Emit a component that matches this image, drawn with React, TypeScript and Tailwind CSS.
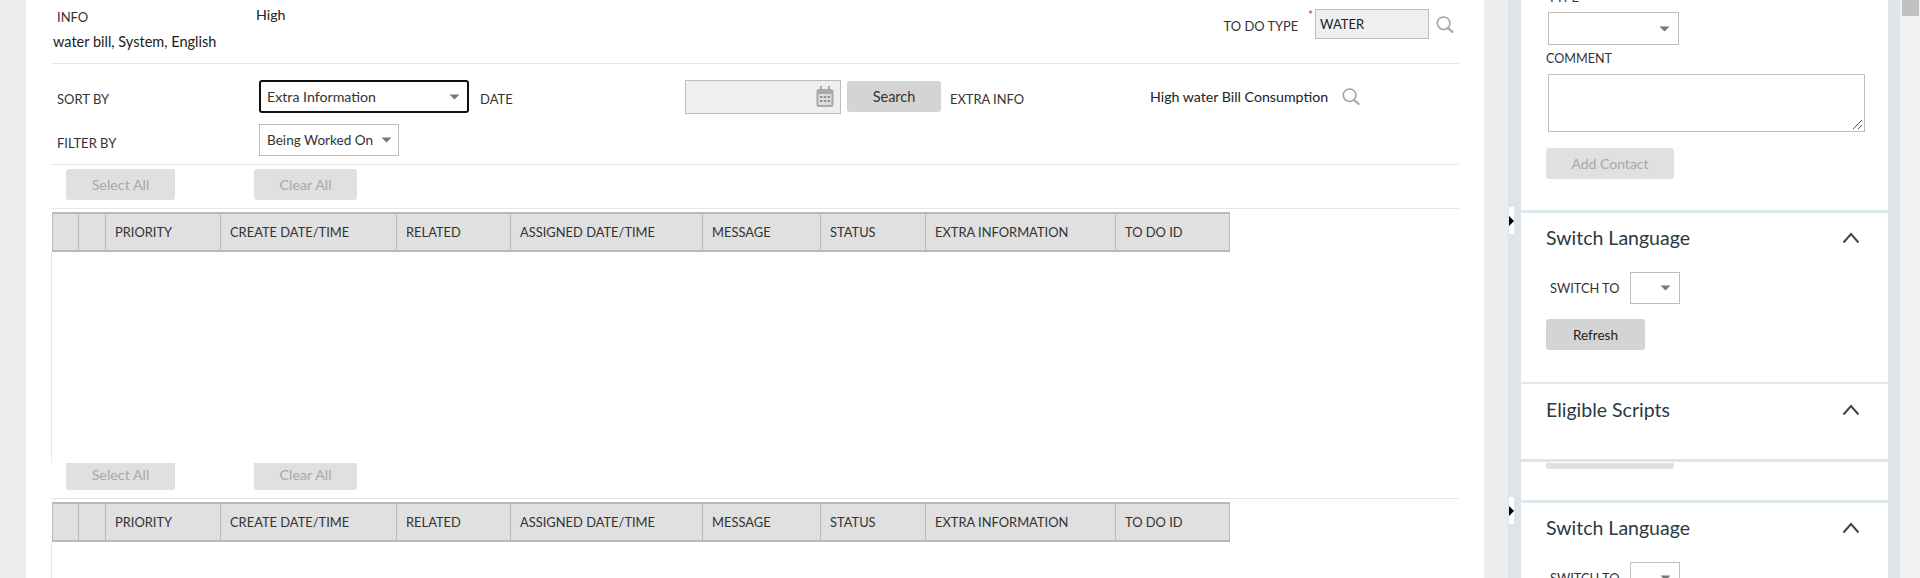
import React from 'react'

const columns = [
  { label: '', width: 'w-[26px]' },
  { label: '', width: 'w-[27px]' },
  { label: 'PRIORITY', width: 'w-[115px]' },
  { label: 'CREATE DATE/TIME', width: 'w-[176px]' },
  { label: 'RELATED', width: 'w-[114px]' },
  { label: 'ASSIGNED DATE/TIME', width: 'w-[192px]' },
  { label: 'MESSAGE', width: 'w-[118px]' },
  { label: 'STATUS', width: 'w-[105px]' },
  { label: 'EXTRA INFORMATION', width: 'w-[190px]' },
  { label: 'TO DO ID', width: 'w-[114px]' },
]

function Caret() {
  return (
    <svg width="11" height="6" viewBox="0 0 11 6" className="shrink-0">
      <path d="M0.5 0.5h10L5.5 5.5z" fill="#777" />
    </svg>
  )
}

function SearchIcon({ className }: { className?: string }) {
  return (
    <svg width="18" height="17" viewBox="0 0 18 17" fill="none" stroke="#a3a3a3" strokeWidth="1.5" className={className}>
      <circle cx="7.6" cy="7.2" r="6.3" />
      <path d="M12 12l5.2 4.6" strokeWidth="2" />
    </svg>
  )
}

function CalendarIcon() {
  return (
    <svg width="18" height="21" viewBox="0 0 18 21" className="shrink-0">
      <rect x="0.5" y="3" width="17" height="18" rx="2.5" fill="#a8a8a8" />
      <rect x="4" y="0" width="2" height="5" fill="#a8a8a8" />
      <rect x="12" y="0" width="2" height="5" fill="#a8a8a8" />
      <rect x="2.5" y="8" width="13" height="11" rx="1" fill="#dcdcdc" />
      <g fill="#8f8f8f">
        <rect x="4" y="10" width="2.4" height="2" />
        <rect x="7.8" y="10" width="2.4" height="2" />
        <rect x="11.6" y="10" width="2.4" height="2" />
        <rect x="4" y="14" width="2.4" height="2" />
        <rect x="7.8" y="14" width="2.4" height="2" />
        <rect x="11.6" y="14" width="2.4" height="2" />
      </g>
    </svg>
  )
}

function Chevron() {
  return (
    <svg width="18" height="12" viewBox="0 0 18 12" fill="none" stroke="#444" strokeWidth="2" className="mr-[28px]">
      <path d="M1.5 10.5L9 2l7.5 8.5" />
    </svg>
  )
}

function Select({ className, text }: { className: string; text?: string }) {
  return (
    <div className={`flex items-center justify-between bg-white text-[#333] ${className}`}>
      <span>{text}</span>
      <Caret />
    </div>
  )
}

function GridHeader() {
  return (
    <div className="ml-px flex h-[40px] w-[1178px] border-y-2 border-r border-l border-[#b9b9b9] bg-[#e0e0e0] text-[12.9px] text-[#333]">
      {columns.map((col, i) => (
        <div key={i} className={`${col.width} flex shrink-0 items-center pl-[9px] ${i < columns.length - 1 ? 'border-r border-[#b9b9b9]' : ''}`}>
          {col.label}
        </div>
      ))}
    </div>
  )
}

function BulkButtons({ clipped }: { clipped?: boolean }) {
  const shape = clipped ? 'h-[27px] pb-[3px] rounded-b-[3px]' : 'h-[31px] mt-[4px] rounded-[3px]'
  return (
    <div className={`flex text-[14.3px] text-[#a9a9a9] ${clipped ? 'h-[36px] border-b border-[#e8e8e8]' : 'h-[44px] border-b border-[#e8e8e8]'}`}>
      <div className={`ml-[15px] flex w-[109px] items-center justify-center bg-[#e0e0e0] ${shape}`}>Select All</div>
      <div className={`ml-[79px] flex w-[103px] items-center justify-center bg-[#e0e0e0] ${shape}`}>Clear All</div>
    </div>
  )
}

function PanelTab({ top }: { top: string }) {
  return (
    <div className={`absolute left-px flex h-[27px] w-[5px] items-center bg-white ${top}`}>
      <div className="h-0 w-0 border-y-[5px] border-l-[5px] border-y-transparent border-l-black" />
    </div>
  )
}

function SwitchLanguage() {
  return (
    <>
      <div className="flex h-[50px] items-center justify-between pl-[25px] text-[19.5px] text-[#2b3a42]">
        Switch Language
        <Chevron />
      </div>
      <div className="mt-[9px] flex items-start pl-[29px] text-[#333]">
        <span className="w-[80px] pt-[6px] text-[12.8px]">SWITCH TO</span>
        <Select className="h-[32px] w-[50px] justify-end border border-[#bdbdbd] pr-[8px]" />
      </div>
    </>
  )
}

export default function App() {
  return (
    <div className="flex h-[578px] overflow-hidden bg-[#ececec] font-['Lato',sans-serif] text-[14.2px] leading-[20px]">
      <div className="w-[26px] shrink-0" />

      <main className="w-[1458px] shrink-0 overflow-hidden bg-white pl-[25px] text-[#333]">
        <div className="w-[1408px]">
          {/* info row */}
          <div className="flex h-[64px] border-b border-[#e8e8e8]">
            <div className="w-[205px]">
              <div className="pt-[7px] pl-[6px] text-[13px]">INFO</div>
              <div className="mt-[5px] pl-[2px] text-[14.5px] text-[#222]">water bill, System, English</div>
            </div>
            <div className="pt-[5px] text-[#222]">High</div>
            <div className="ml-auto flex items-start pr-[5px]">
              <span className="pt-[16px] text-[12.9px]">TO DO TYPE</span>
              <span className="ml-[10px] pt-[9px] text-[11px] leading-[12px] text-[#b03a2e]">*</span>
              <div className="mt-[9px] ml-[2px] flex h-[30px] w-[114px] items-center border border-[#bdbdbd] bg-[#eeeff1] pl-[4px] text-[13px] text-[#222]">WATER</div>
              <SearchIcon className="mt-[16px] ml-[7px]" />
            </div>
          </div>

          {/* sort and filter */}
          <div className="h-[101px] border-b border-[#e8e8e8] pt-[16px]">
            <div className="flex h-[33px] items-center">
              <span className="w-[208px] pt-[5px] pl-[6px] text-[13px]">SORT BY</span>
              <Select text="Extra Information" className="h-[33px] w-[210px] rounded-[3px] border-2 border-[#111] pr-[7px] pl-[6px]" />
              <span className="w-[216px] shrink-0 pt-[5px] pl-[11px] text-[13px]">DATE</span>
              <div className="flex h-[34px] w-[156px] items-center justify-end border border-[#bdbdbd] bg-[#eeeff1] pr-[6px]">
                <CalendarIcon />
              </div>
              <div className="ml-[6px] flex h-[31px] w-[94px] items-center justify-center rounded-[3px] bg-[#d4d4d4] text-[14.5px]">Search</div>
              <span className="w-[209px] shrink-0 pt-[5px] pl-[9px] text-[12.9px]">EXTRA INFO</span>
              <span className="w-[192px] shrink-0 text-[#222]">High water Bill Consumption</span>
              <SearchIcon />
            </div>
            <div className="mt-[11px] flex h-[32px] items-center">
              <span className="w-[208px] pt-[5px] pl-[6px] text-[13px]">FILTER BY</span>
              <Select text="Being Worked On" className="h-[32px] w-[140px] border border-[#bdbdbd] pr-[6px] pl-[7px] text-[13.6px]" />
            </div>
          </div>

          <BulkButtons />
          <div className="pt-[3px]">
            <GridHeader />
            <div className="h-[211px] border-l border-[#e8e8e8]" />
          </div>

          <BulkButtons clipped />
          <div className="pt-[3px]">
            <GridHeader />
            <div className="h-[60px] border-l border-[#e8e8e8]" />
          </div>
        </div>
      </main>

      <div className="w-[24px] shrink-0" />

      <aside className="relative w-[392px] shrink-0 bg-[#dde4ea] pr-[12px] pl-[13px]">
        <PanelTab top="top-[207px]" />
        <PanelTab top="top-[497px]" />
        <div className="h-full overflow-hidden bg-white text-[#333]">
          <div className="-mt-[13px] h-[223px]">
            <div className="pl-[27px] text-[13px] text-[#333]">TYPE</div>
            <Select className="mt-[5px] ml-[27px] h-[33px] w-[131px] border border-[#bdbdbd] pr-[8px]" />
            <div className="mt-[4px] pl-[25px] text-[12.6px]">COMMENT</div>
            <div className="relative mt-[5px] ml-[27px] h-[58px] w-[317px] border border-[#bdbdbd]">
              <svg width="11" height="11" viewBox="0 0 11 11" fill="none" stroke="#555" className="absolute right-px bottom-px">
                <path d="M1 10L10 1M6 10l4-4" />
              </svg>
            </div>
            <div className="mt-[16px] ml-[25px] flex h-[31px] w-[128px] items-center justify-center rounded-[3px] bg-[#e0e0e0] text-[14px] text-[#a9a9a9]">Add Contact</div>
          </div>
          <div className="h-[3px] bg-[#dde8ec]" />
          <div className="h-[169px]">
            <SwitchLanguage />
            <div className="mt-[15px] ml-[25px] flex h-[31px] w-[99px] items-center justify-center rounded-[3px] bg-[#d4d4d4] text-[13.5px] text-[#222]">Refresh</div>
          </div>
          <div className="h-[2px] bg-[#dde8ec]" />
          <div className="flex h-[52px] items-center justify-between pl-[25px] text-[19.5px] text-[#2b3a42]">
            Eligible Scripts
            <Chevron />
          </div>
          <div className="h-[23px]" />
          <div className="h-[3px] bg-[#dde4ea]" />
          <div className="h-[38px] pt-px">
            <div className="ml-[25px] h-[6px] w-[128px] rounded-b-[3px] bg-[#e0e0e0]" />
          </div>
          <div className="h-[3px] bg-[#dde8ec]" />
          <SwitchLanguage />
        </div>
      </aside>

      <div className="w-[20px] shrink-0 bg-[#f1f1f1] pl-[2px]">
        <div className="h-[16px] w-[17px] bg-[#c1c1c1]" />
      </div>
    </div>
  )
}
